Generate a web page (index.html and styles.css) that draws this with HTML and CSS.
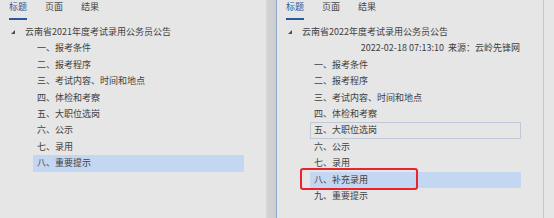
FILE: index.html
```html
<!DOCTYPE html>
<html lang="zh-CN">
<head>
  <meta charset="UTF-8" />
  <title>导航窗格</title>
  <link rel="stylesheet" href="styles.css">
</head>
<body>
  <div class="pane">
    <div class="tabs">
      <div class="tab active">标题</div>
      <div class="tab">页面</div>
      <div class="tab">结果</div>
    </div>
    <div class="tree">
      <div class="node"><span class="twisty"></span>云南省2021年度考试录用公务员公告</div>
      <div class="item">一、报考条件</div>
      <div class="item">二、报考程序</div>
      <div class="item">三、考试内容、时间和地点</div>
      <div class="item">四、体检和考察</div>
      <div class="item">五、大职位选岗</div>
      <div class="item">六、公示</div>
      <div class="item">七、录用</div>
      <div class="item selected">八、重要提示</div>
    </div>
  </div>

  <div class="splitter"></div>

  <div class="pane">
    <div class="tabs">
      <div class="tab active">标题</div>
      <div class="tab">页面</div>
      <div class="tab">结果</div>
    </div>
    <div class="tree">
      <div class="node"><span class="twisty"></span>云南省2022年度考试录用公务员公告</div>
      <div class="item meta">2022-02-18 07:13:10&nbsp; 来源：云岭先锋网</div>
      <div class="item">一、报考条件</div>
      <div class="item">二、报考程序</div>
      <div class="item">三、考试内容、时间和地点</div>
      <div class="item">四、体检和考察</div>
      <div class="item hover">五、大职位选岗</div>
      <div class="item">六、公示</div>
      <div class="item">七、录用</div>
      <div class="item selected">八、补充录用</div>
      <div class="item">九、重要提示</div>
    </div>
    <div class="mark"></div>
  </div>

  <div class="edge"></div>
</body>
</html>
```

FILE: styles.css
```css
* {
  box-sizing: border-box;
  margin: 0;
  padding: 0;
}
body {
  display: flex;
  width: 554px;
  height: 218px;
  background: #e6e6e6;
  color: #404040;
  font-family: "Noto Sans CJK SC", "Noto Sans", sans-serif;
  font-size: 9px;
  overflow: hidden;
}
.pane {
  position: relative;
  width: 266px;
  flex-shrink: 0;
  background: #e6e6e6;
}
.tabs {
  display: flex;
  gap: 18px;
  padding-left: 9px;
  height: 24px;
}
.tab {
  height: 20px;
  line-height: 14px;
  padding-bottom: 4px;
  border-bottom: 2px solid transparent;
  color: #454545;
}
.tab.active {
  color: #2b579a;
  border-bottom-color: #2b579a;
}
.tree {
  line-height: 16.4px;
}
.node {
  display: flex;
  align-items: center;
  padding-left: 11px;
}
.twisty {
  width: 0;
  height: 0;
  margin-right: 10px;
  border-left: 4px solid transparent;
  border-bottom: 4px solid #505050;
}
.item {
  margin-left: 33px;
  width: 211px;
  padding-left: 4px;
  white-space: nowrap;
}
.item.meta {
  text-align: right;
  padding-right: 1px;
}
.item.selected {
  background: #c4d7f2;
}
.item.hover {
  outline: 1px solid #bfc9d8;
  outline-offset: -1px;
}
.mark {
  position: absolute;
  left: 23px;
  top: 168px;
  width: 118px;
  height: 22px;
  border: 2px solid #e8242c;
  border-radius: 3px;
}
.splitter {
  width: 11px;
  flex-shrink: 0;
  background: linear-gradient(90deg, #dadada 0%, #d2d2d2 20%, #cdcdcd 100%);
  border-right: 1px solid #8ea7cb;
}
.edge {
  width: 1px;
  flex-shrink: 0;
  background: #c6c6c6;
}
```
